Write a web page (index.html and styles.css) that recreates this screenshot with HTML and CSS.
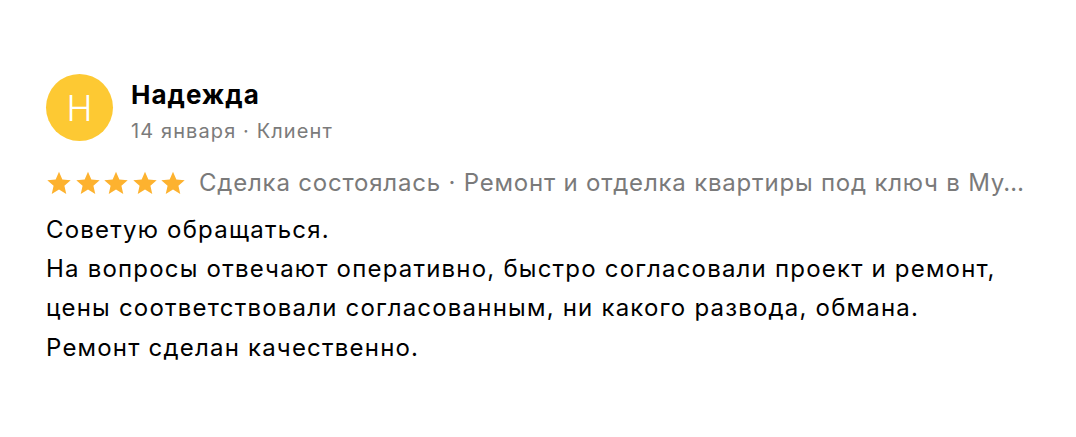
FILE: index.html
```html
<!DOCTYPE html>
<html lang="ru">
<head>
<meta charset="utf-8">
<link rel="stylesheet" href="styles.css">
</head>
<body>
<div class="review">
  <div class="author">
    <div class="avatar">Н</div>
    <div class="author-info">
      <div class="name">Надежда</div>
      <div class="meta">14 января · Клиент</div>
    </div>
  </div>
  <div class="rating-row">
    <div class="stars">
      <svg class="star" viewBox="0 0 24 24"><path d="M12 1.6l3.1 7.1 7.7.7-5.8 5.1 1.7 7.6L12 18.1l-6.7 4 1.7-7.6-5.8-5.1 7.7-.7z"/></svg>
      <svg class="star" viewBox="0 0 24 24"><path d="M12 1.6l3.1 7.1 7.7.7-5.8 5.1 1.7 7.6L12 18.1l-6.7 4 1.7-7.6-5.8-5.1 7.7-.7z"/></svg>
      <svg class="star" viewBox="0 0 24 24"><path d="M12 1.6l3.1 7.1 7.7.7-5.8 5.1 1.7 7.6L12 18.1l-6.7 4 1.7-7.6-5.8-5.1 7.7-.7z"/></svg>
      <svg class="star" viewBox="0 0 24 24"><path d="M12 1.6l3.1 7.1 7.7.7-5.8 5.1 1.7 7.6L12 18.1l-6.7 4 1.7-7.6-5.8-5.1 7.7-.7z"/></svg>
      <svg class="star" viewBox="0 0 24 24"><path d="M12 1.6l3.1 7.1 7.7.7-5.8 5.1 1.7 7.6L12 18.1l-6.7 4 1.7-7.6-5.8-5.1 7.7-.7z"/></svg>
    </div>
    <div class="deal">Сделка состоялась · Ремонт и отделка квартиры под ключ в Му…</div>
  </div>
  <div class="text">
    <p>Советую обращаться.</p>
    <p>На вопросы отвечают оперативно, быстро согласовали проект и ремонт,</p>
    <p>цены соответствовали согласованным, ни какого развода, обмана.</p>
    <p>Ремонт сделан качественно.</p>
  </div>
</div>
</body>
</html>
```

FILE: styles.css
```css
html, body {
  margin: 0;
  padding: 0;
  background: #fff;
}
body {
  font-family: Inter, "Noto Sans", sans-serif;
  color: #000;
}
.review {
  padding: 74px 46px 0 46px;
  width: 984px;
}
.author {
  display: flex;
  align-items: flex-start;
  gap: 18px;
}
.avatar {
  width: 67px;
  height: 67px;
  border-radius: 50%;
  background: #fdc933;
  color: #fff;
  font-size: 35px;
  font-weight: 300;
  display: flex;
  align-items: center;
  justify-content: center;
  flex-shrink: 0;
}
.author-info {
  display: flex;
  flex-direction: column;
  gap: 9px;
  padding-top: 6px;
}
.name {
  font-size: 26px;
  font-weight: 700;
  line-height: 30px;
  letter-spacing: 1px;
}
.meta {
  font-size: 20px;
  line-height: 24px;
  letter-spacing: 1.1px;
  color: #7b7b7b;
}
.rating-row {
  display: flex;
  align-items: center;
  gap: 13px;
  margin-top: 25px;
}
.stars {
  display: flex;
  gap: 2.5px;
  flex-shrink: 0;
}
.star {
  width: 26px;
  height: 26px;
  fill: #fdb22f;
}
.deal {
  font-size: 24px;
  line-height: 30px;
  letter-spacing: 0.8px;
  color: #7a7a7a;
  white-space: nowrap;
}
.text {
  margin-top: 12px;
  font-size: 24px;
  line-height: 39.2px;
  letter-spacing: 1.2px;
}
.text p {
  margin: 0;
}
```
